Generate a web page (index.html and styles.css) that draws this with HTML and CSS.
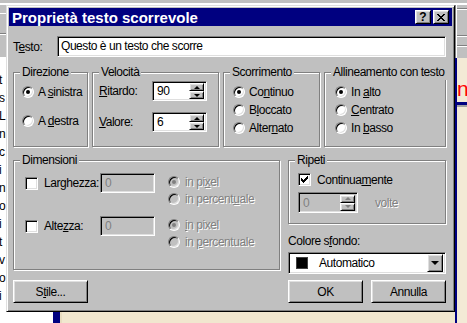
FILE: index.html
```html
<!DOCTYPE html>
<html lang="it">
<head>
  <meta charset="UTF-8">
  <title>Proprietà testo scorrevole</title>
  <link rel="stylesheet" href="styles.css">
</head>
<body>
  <div class="desktop">
    <div class="back-top"></div>
    <div class="back-left">
      <div class="left-text">
        <div>t</div><div>s</div><div>L</div><div>n</div><div>c</div><div>i</div><div>n</div>
        <div>o</div><div>i</div><div>t</div><div>v</div><div>o</div><div>i</div>
      </div>
    </div>
    <div class="back-mid"></div>
    <div class="back-right">
      <div class="right-toolbar"></div>
      <div class="right-page">
        <div class="page-text">nd</div>
      </div>
    </div>
    <div class="back-bottom"></div>

    <!-- the dialog window sits over the desktop -->
    <div class="dialog">
      <div class="titlebar">
        <span class="title">Proprietà testo scorrevole</span>
        <div class="title-buttons">
          <span class="title-btn raised">?</span>
          <span class="title-btn raised">
            <svg width="8" height="7" viewBox="0 0 8 7" shape-rendering="crispEdges"><path d="M0 0h2v1H0zM6 0h2v1H6zM1 1h2v1H1zM5 1h2v1H5zM2 2h4v1H2zM3 3h2v1H3zM2 4h4v1H2zM1 5h2v1H1zM5 5h2v1H5zM0 6h2v1H0zM6 6h2v1H6z"/></svg>
          </span>
        </div>
      </div>

      <div class="dialog-body">
        <div class="text-row">
          <span class="row-label">T<u>e</u>sto:</span>
          <div class="field text-field">Questo è un testo che scorre</div>
        </div>

        <div class="groups">
          <div class="group dir-group">
            <span class="group-title">Direzione</span>
            <div class="option"><span class="radio checked"></span><span>A <u>s</u>inistra</span></div>
            <div class="option"><span class="radio"></span><span>A <u>d</u>estra</span></div>
          </div>

          <div class="group speed-group">
            <span class="group-title">Velocità</span>
            <div class="spin-row">
              <span class="spin-label"><u>R</u>itardo:</span>
              <div class="field spin">
                <span class="spin-value">90</span>
                <span class="spin-buttons">
                  <span class="spin-btn raised"><span class="arrow-up"></span></span>
                  <span class="spin-btn raised"><span class="arrow-down"></span></span>
                </span>
              </div>
            </div>
            <div class="spin-row">
              <span class="spin-label"><u>V</u>alore:</span>
              <div class="field spin">
                <span class="spin-value">6</span>
                <span class="spin-buttons">
                  <span class="spin-btn raised"><span class="arrow-up"></span></span>
                  <span class="spin-btn raised"><span class="arrow-down"></span></span>
                </span>
              </div>
            </div>
          </div>

          <div class="group list-group">
            <span class="group-title">Scorrimento</span>
            <div class="option"><span class="radio checked"></span><span>Co<u>n</u>tinuo</span></div>
            <div class="option"><span class="radio"></span><span>B<u>l</u>occato</span></div>
            <div class="option"><span class="radio"></span><span>Alter<u>n</u>ato</span></div>
          </div>

          <div class="group list-group align-group">
            <span class="group-title">Allineamento con testo</span>
            <div class="option"><span class="radio checked"></span><span>In <u>a</u>lto</span></div>
            <div class="option"><span class="radio"></span><span><u>C</u>entrato</span></div>
            <div class="option"><span class="radio"></span><span>In <u>b</u>asso</span></div>
          </div>
        </div>

        <div class="lower">
          <div class="group size-group">
            <span class="group-title">Dimensioni</span>
            <div class="size-row">
              <div class="size-check"><span class="checkbox"></span><span>Lar<u>g</u>hezza:</span></div>
              <div class="field disabled size-field">0</div>
              <div class="unit-list">
                <div class="option unit disabled"><span class="radio checked"></span><span>in pi<u>x</u>el</span></div>
                <div class="option unit disabled"><span class="radio"></span><span>in percent<u>u</u>ale</span></div>
              </div>
            </div>
            <div class="size-row">
              <div class="size-check"><span class="checkbox"></span><span>Alte<u>z</u>za:</span></div>
              <div class="field disabled size-field">0</div>
              <div class="unit-list">
                <div class="option unit disabled"><span class="radio checked"></span><span><u>i</u>n pixel</span></div>
                <div class="option unit disabled"><span class="radio"></span><span>in <u>p</u>ercentuale</span></div>
              </div>
            </div>
          </div>

          <div class="right-col">
            <div class="group repeat-group">
              <span class="group-title">Ripeti</span>
              <div class="check-row">
                <span class="checkbox">
                  <svg width="7" height="7" viewBox="0 0 7 7" shape-rendering="crispEdges"><path d="M6 0h1v3H6zM5 1h1v3H5zM4 2h1v3H4zM3 3h1v3H3zM2 4h1v3H2zM1 3h1v3H1zM0 2h1v3H0z"/></svg>
                </span>
                <span>Continua<u>m</u>ente</span>
              </div>
              <div class="repeat-row">
                <div class="field disabled spin repeat-spin">
                  <span class="spin-value">0</span>
                  <span class="spin-buttons">
                    <span class="spin-btn raised"><span class="arrow-up off"></span></span>
                    <span class="spin-btn raised"><span class="arrow-down off"></span></span>
                  </span>
                </div>
                <span class="disabled-text">volte</span>
              </div>
            </div>

            <div class="color-label">Colore s<u>f</u>ondo:</div>
            <div class="field combo">
              <span class="swatch"></span>
              <span class="combo-text">Automatico</span>
              <span class="combo-btn raised"><span class="arrow-down big"></span></span>
            </div>
          </div>
        </div>

        <div class="button-row">
          <span class="push raised">S<u>t</u>ile...</span>
          <span class="push raised ok">OK</span>
          <span class="push raised">Annulla</span>
        </div>
      </div>
    </div>
  </div>
</body>
</html>
```

FILE: styles.css
```css
/* Win95 style dialog over a desktop */
* {
  box-sizing: border-box;
}

body {
  margin: 0;
  font-family: "Liberation Sans", Arial, sans-serif;
  font-size: 12px;
  letter-spacing: -0.45px;
  color: #000;
  background: #f1e7cf;
  overflow: hidden;
}

u {
  text-underline-offset: 1px;
}

.desktop {
  position: relative;
  width: 467px;
  height: 323px;
  display: grid;
  grid-template-columns: 6px 1fr 12px;
  grid-template-rows: 5px 1fr 11px;
  grid-template-areas:
    "top top top"
    "left mid right"
    "bottom bottom right";
}

/* backdrop pieces */
.back-top {
  grid-area: top;
  background: #c0c0c0;
  box-shadow: inset 0 -2px #fff;
}

.back-left {
  grid-area: left;
  overflow: hidden;
  background: linear-gradient(#c0c0c0 0 8px, #fff 8px 9px, #c0c0c0 9px 28px, #808080 28px 29px, #fff 29px 30px, #c0c0c0 30px 52px, #fff 52px);
}

.left-text {
  padding-top: 66px;
  line-height: 18px;
  margin-left: -1px;
  letter-spacing: 0;
}

.back-mid {
  grid-area: mid;
}

.back-right {
  grid-area: right;
  display: flex;
  flex-direction: column;
  overflow: hidden;
}

.right-toolbar {
  height: 53px;
  background: linear-gradient(#c0c0c0 0 3px, #808080 3px 4px, #fff 4px 5px, #c0c0c0 5px 30px, #808080 30px 31px, #fff 31px 32px, #c0c0c0 32px 40px, #808080 40px 41px, #fff 41px 42px, #c0c0c0 42px);
  box-shadow: inset 1px 0 #808080, inset 2px 0 #fff;
}

.right-page {
  flex: 1;
  background: #f3ead6;
  border-left: 2px solid #000080;
}

.page-text {
  margin-top: 21px;
  padding-bottom: 3px;
  font-size: 21px;
  line-height: 20px;
  letter-spacing: 0;
  color: #f00;
  border-bottom: 3px solid #000080;
  box-shadow: 0 2px #a0a0a0;
  white-space: nowrap;
}

.back-bottom {
  grid-area: bottom;
  background: linear-gradient(to right, #fff 0 53px, #000080 53px 60px, #e8dcc0 60px 62px, #f1e7cf 62px);
}

/* the dialog */
.dialog {
  position: absolute;
  left: 6px;
  top: 5px;
  width: 449px;
  height: 307px;
  padding: 2px;
  background: #c0c0c0;
  border: 1px solid;
  border-color: #dfdfdf #000 #000 #dfdfdf;
  box-shadow: inset 1px 1px #fff, inset -1px -1px #808080;
}

.titlebar {
  display: flex;
  align-items: center;
  justify-content: space-between;
  height: 18px;
  padding: 0 3px 0 3px;
  background: #000080;
}

.title {
  font-weight: bold;
  font-size: 15px;
  letter-spacing: 0;
  color: #fff;
}

.title-buttons {
  display: flex;
  gap: 2px;
}

.raised {
  background: #c0c0c0;
  border: 1px solid;
  border-color: #fff #000 #000 #fff;
  box-shadow: inset 1px 1px #dfdfdf, inset -1px -1px #808080;
}

.title-btn {
  display: flex;
  align-items: center;
  justify-content: center;
  width: 16px;
  height: 14px;
  font-weight: bold;
  font-size: 12px;
  line-height: 12px;
  letter-spacing: 0;
}

.dialog-body {
  padding: 10px 6px 0 4px;
}

.field {
  background: #fff;
  border: 1px solid;
  border-color: #808080 #fff #fff #808080;
  box-shadow: inset 1px 1px #000, inset -1px -1px #dfdfdf;
}

.field.disabled {
  background: #c0c0c0;
  color: #808080;
}

.text-row {
  display: flex;
  align-items: center;
}

.row-label {
  width: 44px;
}

.text-field {
  flex: 1;
  height: 21px;
  padding: 0 3px;
  line-height: 19px;
}

/* group boxes */
.group {
  position: relative;
  border: 1px solid #808080;
  box-shadow: inset 1px 1px #fff, 1px 1px #fff;
}

.group-title {
  position: absolute;
  top: -8px;
  left: 6px;
  padding: 0 2px;
  line-height: 15px;
  background: #c0c0c0;
  white-space: nowrap;
}

.groups {
  display: grid;
  grid-template-columns: 75px 127px 97px 1fr;
  column-gap: 4px;
  height: 75px;
  margin-top: 15px;
}

.option {
  display: flex;
  align-items: center;
  gap: 4px;
  height: 18px;
  white-space: nowrap;
}

.radio {
  position: relative;
  flex: none;
  width: 12px;
  height: 12px;
  border-radius: 50%;
  background: #fff;
  border: 1px solid;
  border-color: #808080 #fff #fff #808080;
  box-shadow: inset 1px 1px #000, inset -1px -1px #dfdfdf;
}

.radio.checked::after {
  content: "";
  position: absolute;
  left: 3px;
  top: 3px;
  width: 4px;
  height: 4px;
  border-radius: 50%;
  background: #000;
}

.dir-group {
  padding: 10px 0 0 8px;
}

.dir-group .option + .option {
  margin-top: 11px;
}

.speed-group {
  padding: 8px 0 0 6px;
}

.spin-row {
  display: flex;
  align-items: center;
}

.spin-row + .spin-row {
  margin-top: 11px;
}

.spin-label {
  width: 53px;
}

.spin {
  display: flex;
  align-items: center;
  justify-content: space-between;
  width: 55px;
  height: 20px;
  padding: 2px;
}

.spin-value {
  padding-left: 2px;
  line-height: 16px;
}

.spin-buttons {
  display: flex;
  flex-direction: column;
  width: 15px;
  height: 16px;
}

.spin-btn {
  display: flex;
  align-items: center;
  justify-content: center;
  height: 8px;
}

.arrow-up,
.arrow-down {
  width: 0;
  height: 0;
  border-left: 3px solid transparent;
  border-right: 3px solid transparent;
}

.arrow-up {
  border-bottom: 3px solid #000;
}

.arrow-down {
  border-top: 3px solid #000;
}

.arrow-up.off {
  border-bottom-color: #808080;
}

.arrow-down.off {
  border-top-color: #808080;
}

.arrow-down.big {
  border-left-width: 4px;
  border-right-width: 4px;
  border-top-width: 4px;
}

.list-group {
  padding: 10px 0 0 9px;
}

.align-group {
  padding-left: 10px;
}

/* lower part */
.lower {
  display: grid;
  grid-template-columns: 267px 1fr;
  column-gap: 8px;
  align-items: start;
  margin-top: 13px;
}

.size-group {
  height: 110px;
  padding: 12px 0 0 11px;
}

.size-row {
  display: flex;
  align-items: flex-start;
}

.size-row + .size-row {
  margin-top: 9px;
}

.size-check {
  display: flex;
  align-items: center;
  gap: 6px;
  width: 75px;
  height: 20px;
}

.checkbox {
  display: flex;
  align-items: center;
  justify-content: center;
  flex: none;
  width: 13px;
  height: 13px;
  background: #fff;
  border: 1px solid;
  border-color: #808080 #fff #fff #808080;
  box-shadow: inset 1px 1px #000, inset -1px -1px #dfdfdf;
}

.size-field {
  width: 55px;
  height: 20px;
  padding: 0 4px;
  line-height: 18px;
}

.unit-list {
  margin-left: 13px;
}

.option.unit {
  height: 17px;
  gap: 5px;
}

.option.disabled,
.disabled-text {
  color: #808080;
  text-shadow: 1px 1px #fff;
}

.option.disabled .radio {
  background: #c0c0c0;
}

.option.disabled .radio.checked::after {
  background: #808080;
}

.right-col {
  display: flex;
  flex-direction: column;
}

.repeat-group {
  height: 64px;
  padding: 12px 0 0 9px;
}

.check-row {
  display: flex;
  align-items: center;
  gap: 6px;
  height: 13px;
}

.repeat-row {
  display: flex;
  align-items: center;
  margin-top: 6px;
}

.repeat-spin {
  width: 60px;
  height: 21px;
}

.repeat-row .disabled-text {
  margin-left: 17px;
}

.color-label {
  margin-top: 10px;
  line-height: 15px;
}

.combo {
  display: flex;
  align-items: center;
  height: 22px;
  margin-top: 3px;
  padding: 2px;
}

.swatch {
  width: 12px;
  height: 12px;
  margin-left: 5px;
  background: #000;
  border: 1px solid #404040;
}

.combo-text {
  flex: 1;
  margin-left: 11px;
}

.combo-btn {
  display: flex;
  align-items: center;
  justify-content: center;
  width: 16px;
  height: 18px;
}

.button-row {
  display: flex;
  margin-top: 6px;
}

.push {
  display: flex;
  align-items: center;
  justify-content: center;
  width: 75px;
  height: 23px;
}

.push.ok {
  margin-left: auto;
  margin-right: 8px;
}
```
